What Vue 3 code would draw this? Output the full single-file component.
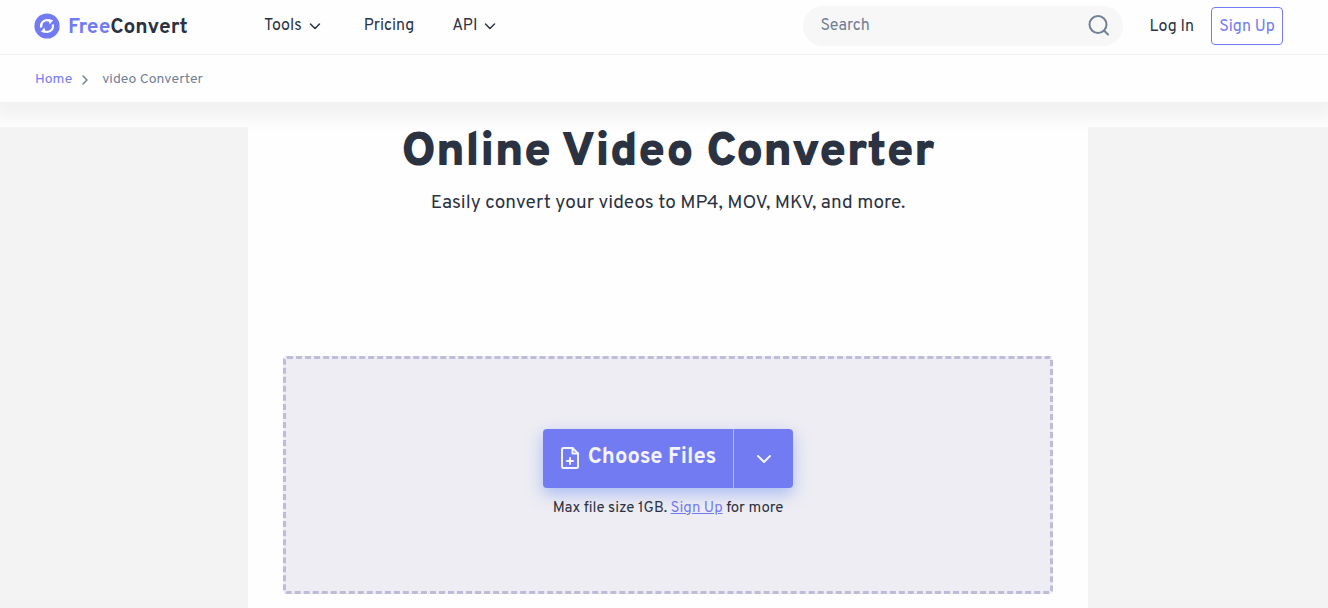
<script setup>
const menus = [
  { label: 'Tools', arrow: true },
  { label: 'Pricing', arrow: false },
  { label: 'API', arrow: true },
]
</script>

<template>
  <div class="page">
    <header class="topbar">
      <a class="brand" href="#">
        <svg class="mark" viewBox="0 0 26 26" aria-hidden="true">
          <circle cx="13" cy="13" r="12.6" fill="#737bf3" />
          <g fill="none" stroke="#fff" stroke-width="2.2">
            <path d="M7.2 14.6A6 6 0 0 1 15.6 7.7" />
            <path d="M18.8 11.4A6 6 0 0 1 10.4 18.3" />
          </g>
          <path d="M14.6 6 19.2 7.2 15.6 11.6z" fill="#fff" />
          <path d="M11.4 20 6.8 18.8 10.4 14.4z" fill="#fff" />
        </svg>
        <span class="name"><span class="accent">Free</span>Convert</span>
      </a>
      <nav class="menu" aria-label="Main">
        <template v-for="m in menus" :key="m.label">
          <button v-if="m.arrow" type="button" class="item arrow">
            {{ m.label }}
            <svg width="12" height="8" viewBox="0 0 12 8" aria-hidden="true"><path d="M1.5 2 6 6.5 10.5 2" fill="none" stroke="currentColor" stroke-width="1.5" stroke-linecap="round" stroke-linejoin="round" /></svg>
          </button>
          <a v-else href="#" class="item">{{ m.label }}</a>
        </template>
      </nav>
      <form class="search" role="search" @submit.prevent>
        <input type="text" placeholder="Search" aria-label="Search" />
        <button type="submit" aria-label="Submit search">
          <svg width="24" height="24" viewBox="0 0 24 24" fill="none" stroke="currentColor" stroke-width="2" stroke-linecap="round" aria-hidden="true"><circle cx="11" cy="10.5" r="8.5" /><path d="m17.5 17 3.500 3.500" /></svg>
        </button>
      </form>
      <a class="login" href="#">Log In</a>
      <a class="signup" href="#">Sign Up</a>
    </header>

    <nav class="crumbs" aria-label="Breadcrumb">
      <a href="#">Home</a>
      <svg width="8" height="12" viewBox="0 0 8 12" aria-hidden="true"><path d="m2 2 4 4-4 4" fill="none" stroke="currentColor" stroke-width="1.5" stroke-linecap="round" stroke-linejoin="round" /></svg>
      <span>video Converter</span>
    </nav>

    <div class="body">
      <aside class="side"></aside>
      <main class="content">
        <h1>Online Video Converter</h1>
        <p class="lead">Easily convert your videos to MP4, MOV, MKV, and more.</p>
        <section class="drop" aria-label="File upload">
          <div class="picker">
            <button type="button" class="choose">
              <svg width="20" height="24" viewBox="0 0 20 24" fill="none" stroke="currentColor" stroke-width="2" stroke-linecap="round" stroke-linejoin="round" aria-hidden="true">
                <path d="M12.500 2H3.500A1.500 1.500 0 0 0 2 3.500v17A1.500 1.500 0 0 0 3.500 22h13a1.500 1.500 0 0 0 1.500-1.500V7.500z" />
                <path d="M12.500 2v5.500H18M10 12v6M7 15h6" />
              </svg>
              Choose Files
            </button>
            <button type="button" class="more" aria-label="More sources">
              <svg width="16" height="10" viewBox="0 0 16 10" aria-hidden="true"><path d="m2 2 6 6 6-6" fill="none" stroke="currentColor" stroke-width="2" stroke-linecap="round" stroke-linejoin="round" /></svg>
            </button>
          </div>
          <p class="limit">Max file size 1GB. <a href="#">Sign Up</a> for more</p>
        </section>
      </main>
      <aside class="side"></aside>
    </div>
  </div>
</template>

<style>
body {
  margin: 0;
  background: #fefefe;
}
</style>

<style scoped>
.page {
  display: flex;
  flex-direction: column;
  height: 100vh;
  overflow: hidden;
  font-family: Overpass, Roboto, "Liberation Sans", sans-serif;
  font-size: 16px;
  color: #2b3242;
}
a {
  color: inherit;
  text-decoration: none;
}
button {
  padding: 0;
  border: 0;
  background: none;
  font: inherit;
  color: inherit;
  cursor: pointer;
}
svg {
  display: block;
  flex: none;
}
.topbar {
  display: flex;
  align-items: center;
  flex: none;
  box-sizing: border-box;
  height: 55px;
  padding: 0 45px 3px 34px;
  border-bottom: 1px solid #f0f0f2;
}
.brand {
  display: flex;
  align-items: center;
  gap: 8px;
  width: 230px;
  font-size: 21px;
  font-weight: 700;
}
.mark {
  width: 26px;
  height: 26px;
}
.name {
  padding-top: 3px;
}
.accent {
  color: #737bf3;
}
.menu {
  display: flex;
  gap: 38px;
}
.item {
  display: flex;
  align-items: center;
  gap: 7px;
}
.arrow {
  padding-right: 5px;
}
.search {
  display: flex;
  align-items: center;
  box-sizing: border-box;
  width: 320px;
  height: 40px;
  margin-left: auto;
  padding: 0 12px 0 18px;
  border-radius: 20px;
  background: #f7f7f7;
  color: #718096;
}
.search input {
  flex: 1;
  min-width: 0;
  padding: 0;
  border: 0;
  outline: 0;
  background: none;
  font: inherit;
  color: inherit;
}
.search input::placeholder {
  color: #718096;
  opacity: 1;
}
.login {
  margin: 0 17px 0 27px;
  line-height: 38px;
  padding-top: 2px;
}
.signup {
  box-sizing: border-box;
  width: 72px;
  height: 38px;
  padding-top: 1px;
  border: 1px solid #737bf3;
  border-radius: 4px;
  line-height: 36px;
  text-align: center;
  color: #737bf3;
}
.crumbs {
  position: relative;
  display: flex;
  align-items: center;
  flex: none;
  box-sizing: border-box;
  height: 47px;
  padding: 2px 35px 0;
  font-size: 14px;
  color: #718096;
  background: #fefefe;
  box-shadow: 0 8px 16px 8px rgba(0, 0, 0, 0.05);
  clip-path: inset(0 0 -30px 0);
}
.crumbs a {
  color: #737bf3;
}
.crumbs svg {
  margin: 0 13px 0 9px;
}
.body {
  display: grid;
  flex: 1;
  grid-template-columns: 248px minmax(0, 1fr) 240px;
  margin-top: 25px;
}
.side {
  position: relative;
  background: #f3f3f3;
}
.content {
  padding: 4px 35px 14px;
  text-align: center;
}
h1 {
  margin: 0;
  font-size: 48px;
  line-height: 44px;
  font-weight: 900;
}
.lead {
  margin: 14px 0 0;
  font-size: 19px;
  line-height: 28px;
}
.drop {
  display: flex;
  flex-direction: column;
  align-items: center;
  box-sizing: border-box;
  margin-top: 139px;
  padding: 70px 0 72px;
  border: 3px dashed #bebdd9;
  border-radius: 4px;
  background: #eeedf3;
}
.picker {
  display: flex;
  width: 250px;
  height: 59px;
  border-radius: 4px;
  background: #737bf3;
  color: #f4f4ff;
  box-shadow: 0 6px 16px rgba(100, 140, 245, 0.5);
}
.choose {
  display: flex;
  flex: 1;
  align-items: center;
  justify-content: center;
  gap: 8px;
  padding-bottom: 2px;
  font-size: 22px;
  font-weight: 700;
}
.more {
  display: flex;
  align-items: center;
  justify-content: center;
  box-sizing: border-box;
  width: 60px;
  border-left: 1px solid #b5bbfa;
}
.limit {
  margin: 10px 0 0;
  font-size: 15px;
  line-height: 21px;
}
.limit a {
  color: #737bf3;
  text-decoration: underline;
}
</style>
